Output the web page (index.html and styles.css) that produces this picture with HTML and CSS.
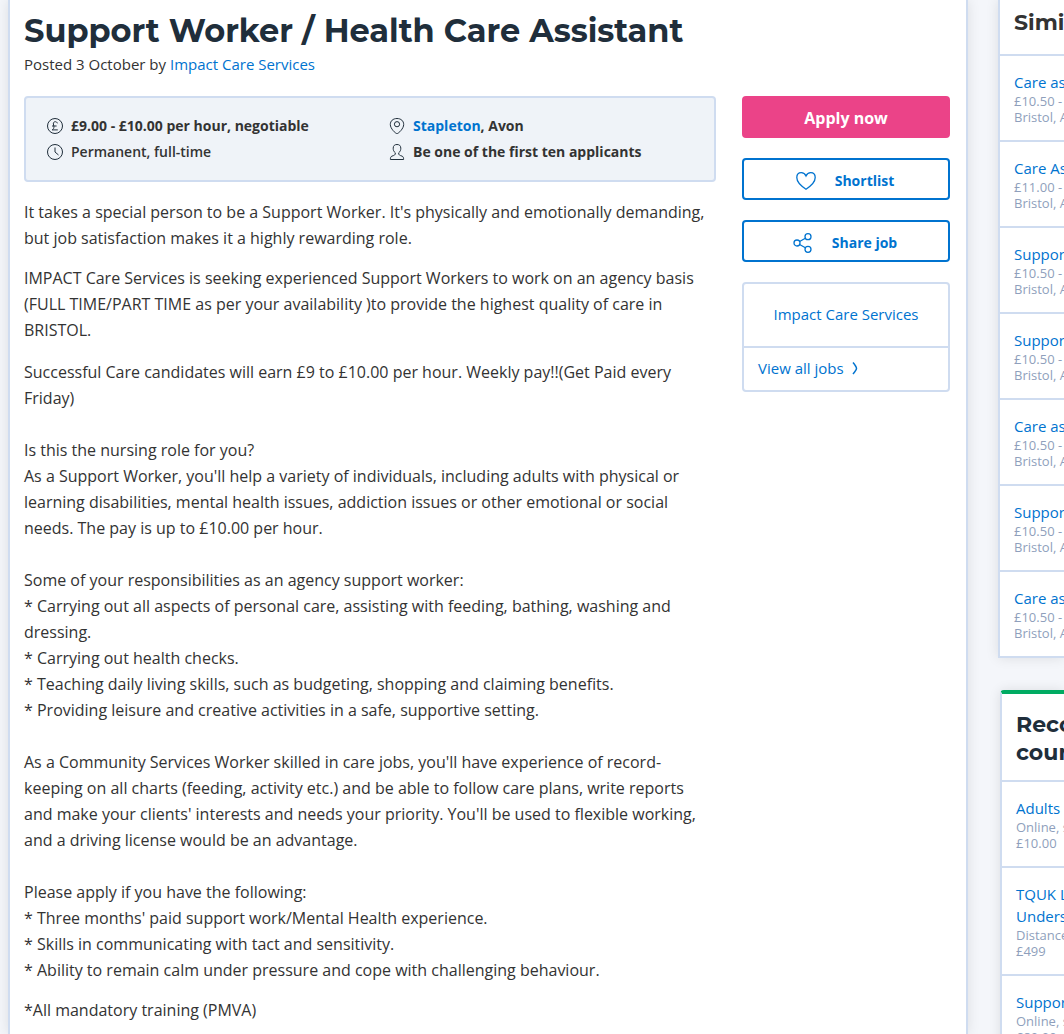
FILE: index.html
```html
<!DOCTYPE html>
<html lang="en">
<head>
<meta charset="utf-8">
<meta name="viewport" content="width=device-width, initial-scale=1">
<title>Support Worker / Health Care Assistant</title>
<link rel="stylesheet" href="styles.css">
</head>
<body>
<div class="page">
  <main class="job">
    <h1 class="job-title">Support Worker / Health Care Assistant</h1>
    <p class="posted">Posted 3 October by <a href="#">Impact Care Services</a></p>
    <div class="job-columns">
      <div class="job-body">
        <ul class="facts">
          <li class="fact">
            <svg class="icon" viewBox="0 0 18 18"><circle cx="9" cy="9" r="7.5"/><path d="M11.4 6.3C11 5.1 10.2 4.700 9.300 4.700 7.900 4.700 7.200 5.700 7.400 7L7.900 9.500C8 11 7.500 12.200 6.200 12.900H11.800M6 9H10.600"/></svg>
            <strong>£9.00 - £10.00 per hour, negotiable</strong>
          </li>
          <li class="fact">
            <svg class="icon" viewBox="0 0 18 18"><path d="M9 1.500C5 1.500 2.300 4 2.300 7.500 2.300 11.500 7.500 16.600 9 16.600S15.700 11.500 15.700 7.500C15.700 4 13 1.500 9 1.500Z"/><circle cx="9" cy="7.200" r="2.600"/></svg>
            <strong><a href="#">Stapleton</a>, Avon</strong>
          </li>
          <li class="fact">
            <svg class="icon" viewBox="0 0 18 18"><circle cx="9" cy="9" r="7.500"/><path d="M9 4.500V9L12.500 12"/></svg>
            <span>Permanent, full-time</span>
          </li>
          <li class="fact">
            <svg class="icon" viewBox="0 0 18 18"><path d="M7.300 9.800C5.600 8.500 5.200 7 5.200 5.200 5.200 2.600 6.700 1.500 9 1.500S12.800 2.600 12.800 5.200C12.800 7 12.400 8.500 10.700 9.800 10.400 12.200 12 12.400 14 13.100 15.300 13.600 15.600 14.700 15.600 16.500H2.400C2.400 14.700 2.700 13.600 4 13.100 6 12.400 7.600 12.200 7.300 9.800Z"/></svg>
            <strong>Be one of the first ten applicants</strong>
          </li>
        </ul>
        <div class="intro">
          <p>It takes a special person to be a Support Worker. It's physically and emotionally demanding, but job satisfaction makes it a highly rewarding role.</p>
          <p>IMPACT Care Services is seeking experienced Support Workers to work on an agency basis (FULL TIME/PART TIME as per your availability )to provide the highest quality of care in BRISTOL.</p>
        </div>
        <div class="details">
          <p>Successful Care candidates will earn £9 to £10.00 per hour. Weekly pay!!(Get Paid every Friday)<br><br>
          Is this the nursing role for you?<br>
          As a Support Worker, you'll help a variety of individuals, including adults with physical or learning disabilities, mental health issues, addiction issues or other emotional or social needs. The pay is up to £10.00 per hour.<br><br>
          Some of your responsibilities as an agency support worker:<br>
          * Carrying out all aspects of personal care, assisting with feeding, bathing, washing and dressing.<br>
          * Carrying out health checks.<br>
          * Teaching daily living skills, such as budgeting, shopping and claiming benefits.<br>
          * Providing leisure and creative activities in a safe, supportive setting.<br><br>
          As a Community Services Worker skilled in care jobs, you'll have experience of record-keeping on all charts (feeding, activity etc.) and be able to follow care plans, write reports and make your clients' interests and needs your priority. You'll be used to flexible working, and a driving license would be an advantage.<br><br>
          Please apply if you have the following:<br>
          * Three months' paid support work/Mental Health experience.<br>
          * Skills in communicating with tact and sensitivity.<br>
          * Ability to remain calm under pressure and cope with challenging behaviour.</p>
          <p>*All mandatory training (PMVA)</p>
        </div>
      </div>
      <div class="actions">
        <button type="button" class="button button-primary">Apply now</button>
        <button type="button" class="button">
          <svg class="button-icon" viewBox="0 0 22 22"><path d="M11 19.200C8 17.300 1.800 12.500 1.800 7.600 1.800 4.600 3.700 2.700 6.300 2.700 8.500 2.700 10 3.800 11 6 12 3.800 13.500 2.700 15.700 2.700 18.300 2.700 20.200 4.600 20.200 7.600 20.200 12.500 14 17.300 11 19.200Z"/></svg>
          Shortlist
        </button>
        <button type="button" class="button">
          <svg class="button-icon" viewBox="0 0 22 22"><circle cx="5" cy="11" r="3"/><circle cx="16" cy="4.700" r="3"/><circle cx="16" cy="17.300" r="3"/><path d="M7.600 9.500L13.400 6.200M7.600 12.500L13.400 15.800"/></svg>
          Share job
        </button>
        <div class="company">
          <a class="company-name" href="#">Impact Care Services</a>
          <a class="company-jobs" href="#">View all jobs <svg class="chevron" viewBox="0 0 8 14"><path d="M2 1.500C4.500 4.500 5.500 6.500 5.500 7.500S4.500 10 2 13"/></svg></a>
        </div>
      </div>
    </div>
  </main>
  <aside class="sidebar">
    <section class="card">
      <h2 class="card-title">Similar jobs</h2>
      <ul class="card-list">
        <li><a href="#">Care assistant</a><span>£10.50 -</span><span>Bristol, Avon</span></li>
        <li><a href="#">Care Assistant</a><span>£11.00 -</span><span>Bristol, Avon</span></li>
        <li><a href="#">Support</a><span>£10.50 -</span><span>Bristol, Avon</span></li>
        <li><a href="#">Support</a><span>£10.50 -</span><span>Bristol, Avon</span></li>
        <li><a href="#">Care assistant</a><span>£10.50 -</span><span>Bristol, Avon</span></li>
        <li><a href="#">Support</a><span>£10.50 -</span><span>Bristol, Avon</span></li>
        <li><a href="#">Care assistant</a><span>£10.50 -</span><span>Bristol, Avon</span></li>
      </ul>
    </section>
    <section class="card card-courses">
      <h2 class="card-title">Recommended<br>courses</h2>
      <ul class="card-list">
        <li><a href="#">Adults</a><span>Online, self</span><span>£10.00</span></li>
        <li><a href="#">TQUK Level<br>Understanding</a><span>Distance</span><span>£499</span></li>
        <li><a href="#">Support</a><span>Online, self</span><span>£80.00</span></li>
      </ul>
    </section>
  </aside>
</div>
</body>
</html>
```
FILE: styles.css
```css
* { box-sizing: border-box; }

body {
  margin: 0;
  background: #f4f6fa;
  color: #333;
  font-family: "Open Sans", sans-serif;
  font-size: 16px;
  line-height: 26px;
}

h1, h2, p, ul { margin: 0; padding: 0; }
ul { list-style: none; }
a { color: #0073cf; text-decoration: none; }
strong { font-weight: 700; }

.page {
  display: flex;
  gap: 30px;
  height: 100vh;
  padding-left: 8px;
  overflow: hidden;
}

.job {
  flex: 1;
  min-width: 0;
  min-height: 100%;
  padding: 8px 16px 0 14px;
  background: #fff;
  border: solid #cfdcf0;
  border-width: 0 2px;
  box-shadow: 0 0 12px rgba(0, 0, 0, 0.1);
}

.job-title {
  color: #202e3b;
  font-family: Montserrat, Inter, sans-serif;
  font-size: 32px;
  font-weight: 700;
  line-height: 45px;
}

.posted { font-size: 15px; line-height: 22px; }

.job-columns {
  display: flex;
  gap: 26px;
  margin-top: 21px;
}

.job-body { flex: 1; min-width: 0; }

.facts {
  display: grid;
  grid-template-columns: 1fr 1fr;
  column-gap: 36px;
  padding: 15px 20px;
  background: #eff3f8;
  border: 2px solid #cfdcf0;
  border-radius: 4px;
  font-size: 14px;
  font-weight: 600;
}

.fact { display: flex; align-items: center; gap: 7px; }

.icon {
  width: 18px;
  height: 18px;
  fill: none;
  stroke: #202e3b;
  stroke-width: 1;
}

.intro, .details { display: grid; gap: 14px; }
.intro { margin-top: 17px; }
.details { margin-top: 16px; }

.actions {
  display: flex;
  flex: 0 0 208px;
  flex-direction: column;
  gap: 20px;
}

.button {
  display: flex;
  align-items: center;
  justify-content: center;
  gap: 18px;
  height: 42px;
  padding: 3px 3px 0 0;
  background: #fff;
  border: 2px solid #0073cf;
  border-radius: 4px;
  color: #0073cf;
  font: 700 14px/22px "Open Sans", sans-serif;
}

.button-primary {
  padding: 1px 0 0;
  background: #eb4388;
  border-color: #eb4388;
  color: #fff;
  font-size: 16px;
}

.button-icon {
  width: 22px;
  height: 22px;
  fill: none;
  stroke: #0073cf;
  stroke-width: 1.3;
}

.company {
  border: 2px solid #cfdcf0;
  border-radius: 4px;
  font-size: 15px;
  line-height: 22px;
}

.company-name {
  display: block;
  padding: 19px 14px 21px;
  border-bottom: 2px solid #cfdcf0;
  text-align: center;
}

.company-jobs {
  display: flex;
  align-items: center;
  gap: 7px;
  padding: 9px 14px 11px;
}

.chevron {
  width: 8px;
  height: 14px;
  fill: none;
  stroke: #0073cf;
  stroke-width: 1.5;
}

.sidebar {
  display: flex;
  flex: 0 0 66px;
  flex-direction: column;
  gap: 32px;
  min-width: 0;
}

.card {
  background: #fff;
  border-left: 2px solid #cfdcf0;
  box-shadow: 0 0 12px rgba(0, 0, 0, 0.1);
  white-space: nowrap;
}

.card-title {
  padding: 9px 14px 17px;
  border-bottom: 2px solid #cfdcf0;
  font-family: Montserrat, Inter, sans-serif;
  font-size: 22px;
  font-weight: 700;
  line-height: 28px;
}

.card-list li {
  padding: 15px 14px;
  border-bottom: 2px solid #cfdcf0;
  color: #8f9fbc;
  font-size: 13px;
  line-height: 16px;
}

.card-list a { display: block; font-size: 15px; line-height: 22px; }
.card-list span { display: block; }

.card-courses {
  margin-left: 2px;
  border-top: 4px solid #00ab62;
  border-radius: 4px 0 0 0;
}

.card-courses .card-title {
  padding: 17px 14px 13px;
  color: #202e3b;
}
```
